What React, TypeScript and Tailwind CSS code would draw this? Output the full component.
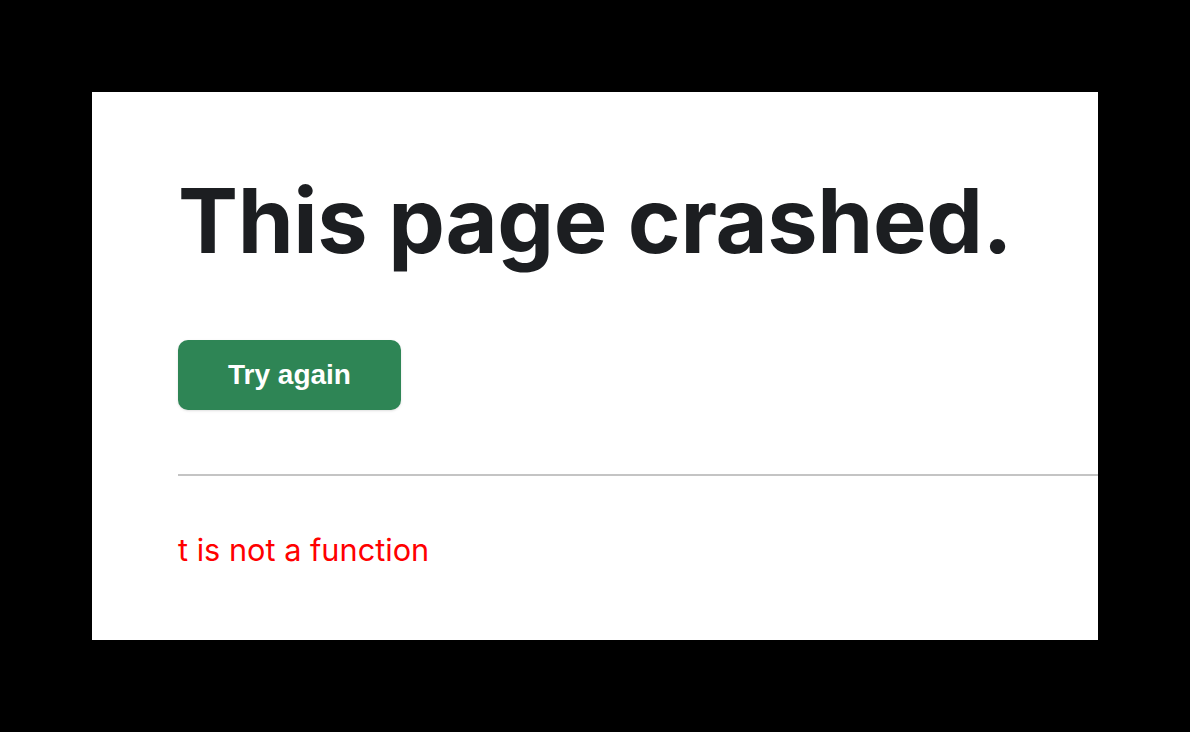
import React from 'react';

const App: React.FC = () => {
  return (
    <div className="w-[1190px] h-[732px] bg-black pt-[92px] pl-[92px]">
      <div className="w-[1006px] h-[548px] bg-white pl-[86px] pt-[75px]">
        <h1
          className="text-[90px] leading-[1.2] font-bold text-[#1c1e21] tracking-[-0.4px]"
          style={{ fontFamily: 'Inter, "Liberation Sans", sans-serif' }}
        >
          This page crashed.
        </h1>
        <div className="mt-[65px]">
          <button
            className="w-[223px] h-[70px] rounded-[10px] bg-[#2e8555] text-white text-[28px] font-bold shadow-sm"
            style={{ fontFamily: '"Liberation Sans", Arial, sans-serif' }}
          >
            Try again
          </button>
        </div>
        <hr className="mt-[64px] border-0 h-[2px] bg-[#c4c4c4]" />
        <div
          className="mt-[56px] text-[30.7px] leading-[1.2] text-[#ff0000]"
          style={{ fontFamily: 'Inter, "Liberation Sans", sans-serif' }}
        >
          t is not a function
        </div>
      </div>
    </div>
  );
};

export default App;
